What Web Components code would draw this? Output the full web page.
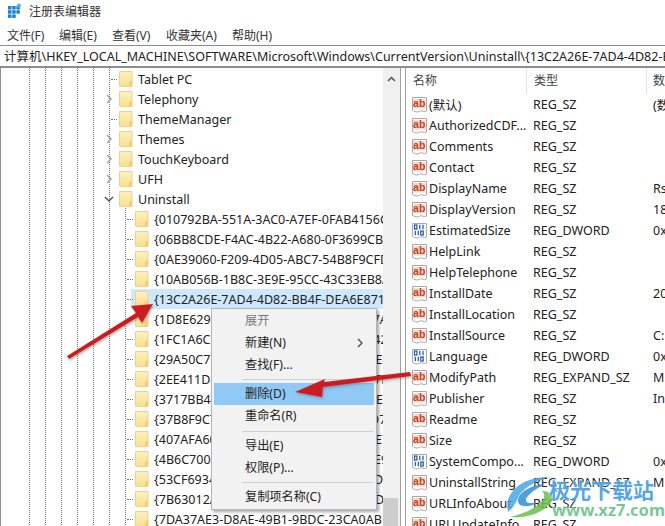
<!DOCTYPE html>
<html lang="zh">
<head>
<meta charset="utf-8">
<title>注册表编辑器</title>
<style>
    html, body {
        margin: 0;
        height: 100%;
        overflow: hidden;
        background: #fff;
        color: #222;
        font: 12.5px "Noto Sans", "Noto Sans CJK SC", sans-serif;
    }
</style>
</head>
<body>
<reg-app>
    <reg-titlebar>注册表编辑器</reg-titlebar>
    <reg-menubar>
        <span style="width:52px">文件(F)</span>
        <span style="width:53px">编辑(E)</span>
        <span style="width:54px">查看(V)</span>
        <span style="width:66px">收藏夹(A)</span>
        <span>帮助(H)</span>
    </reg-menubar>
    <reg-address>计算机\HKEY_LOCAL_MACHINE\SOFTWARE\Microsoft\Windows\CurrentVersion\Uninstall\{13C2A26E-7AD4-4D82-BB4F-DEA6E871A3F0}</reg-address>
    <reg-panes>
        <reg-tree slot="tree"></reg-tree>
        <reg-list slot="list"></reg-list>
    </reg-panes>
    <reg-menu></reg-menu>
    <reg-marks></reg-marks>
</reg-app>

<script>
const FOLDER_ICON = `
    <svg width="14" height="16" viewBox="0 0 14 16">
        <defs>
            <linearGradient id="fold" x1="0" y1="0" x2="0" y2="1">
                <stop offset="0" stop-color="#fdf0c0"/>
                <stop offset="1" stop-color="#fbdf8e"/>
            </linearGradient>
        </defs>
        <path d="M.5.5h12.500v15H.5z" fill="url(#fold)" stroke="#e9d48f"/>
        <path d="M10 15.500v-4l3-3v7z" fill="#f3cf70"/>
    </svg>`;

const STRING_ICON = `
    <svg width="17" height="18" viewBox="0 0 17 18">
        <path d="M1.500 1.500h14v13.500c-2.500 2-4.500-1.500-7 .2s-4.500.3-7-.7z" fill="#fff" stroke="#a9a9a9"/>
        <rect x="2" y="3" width="12.500" height="9.500" fill="#f6d9cc"/>
        <text x="8.200" y="11" text-anchor="middle" font-family="Liberation Sans" font-weight="700" font-size="10.500" fill="#c8401f">ab</text>
    </svg>`;

const DWORD_ICON = `
    <svg width="17" height="18" viewBox="0 0 17 18">
        <path d="M1.500 1.500h14v13.500c-2.500 2-4.500-1.500-7 .2s-4.500.3-7-.7z" fill="#fff" stroke="#a9a9a9"/>
        <g fill="none" stroke="#2a5fb0" stroke-width="1.300">
            <rect x="3.500" y="3" width="2.400" height="4"/>
            <path d="M8.800 2.800v4.400M12 2.800v4.400"/>
            <path d="M4.300 8.800v4.400M7.300 8.800v4.400"/>
            <rect x="9.800" y="9" width="2.400" height="4"/>
        </g>
    </svg>`;

class RegApp extends HTMLElement {
    constructor() {
        super();
        this.attachShadow({mode: "open"});
        this.shadowRoot.innerHTML = `
            <style>
                :host {
                    display: flex;
                    flex-direction: column;
                    position: relative;
                    width: 665px;
                    height: 526px;
                    overflow: hidden;
                }
            </style>
            <slot></slot>
        `;
    }
}

class RegTitlebar extends HTMLElement {
    constructor() {
        super();
        this.attachShadow({mode: "open"});
        this.shadowRoot.innerHTML = `
            <style>
                :host {
                    display: flex;
                    align-items: center;
                    gap: 7px;
                    height: 21px;
                    padding-left: 8px;
                    font-size: 12px;
                    color: #333;
                }
            </style>
            <svg width="14" height="15" viewBox="0 0 14 15">
                <g fill="#1b83c9">
                    <rect x="0" y="3" width="3.500" height="3.500"/>
                    <rect x="4.200" y="3" width="3.500" height="3.500"/>
                    <rect x="8.400" y="3" width="3.500" height="3.500"/>
                    <rect x="0" y="7.200" width="3.500" height="3.500"/>
                    <rect x="4.200" y="7.200" width="3.500" height="3.500"/>
                    <rect x="8.400" y="7.200" width="3.500" height="3.500"/>
                    <rect x="0" y="11.400" width="3.500" height="3.500"/>
                    <rect x="4.200" y="11.400" width="3.500" height="3.500"/>
                </g>
                <path d="M11 0l2.500 2.500L11 5 8.500 2.500z" fill="#5ab4e4"/>
            </svg>
            <slot></slot>
        `;
    }
}

class RegMenubar extends HTMLElement {
    constructor() {
        super();
        this.attachShadow({mode: "open"});
        this.shadowRoot.innerHTML = `
            <style>
                :host {
                    display: flex;
                    align-items: center;
                    box-sizing: border-box;
                    height: 24px;
                    padding: 3px 0 0 7px;
                    font-size: 12px;
                    color: #333;
                }
                ::slotted(span) {
                    display: block;
                    flex: none;
                }
            </style>
            <slot></slot>
        `;
    }
}

class RegAddress extends HTMLElement {
    constructor() {
        super();
        this.attachShadow({mode: "open"});
        this.shadowRoot.innerHTML = `
            <style>
                :host {
                    display: block;
                    box-sizing: border-box;
                    flex: none;
                    height: 23px;
                    line-height: 22px;
                    padding-left: 4px;
                    border-top: 1px solid #8e8e8e;
                    border-bottom: 2px solid #8e8e8e;
                    white-space: nowrap;
                    overflow: hidden;
                    color: #222;
                }
            </style>
            <slot></slot>
        `;
    }
}

class RegPanes extends HTMLElement {
    constructor() {
        super();
        this.attachShadow({mode: "open"});
        this.shadowRoot.innerHTML = `
            <style>
                :host {
                    display: flex;
                    flex: 1;
                    min-height: 0;
                }
                .scrollbar {
                    flex: none;
                    display: flex;
                    justify-content: center;
                    align-items: flex-start;
                    position: relative;
                    width: 17px;
                    background: #f0f0f0;
                }
                .scrollbar svg {
                    margin-top: 8px;
                }
                .thumb {
                    position: absolute;
                    left: 0;
                    right: 2px;
                    bottom: 0;
                    height: 28px;
                    background: #cdcdcd;
                }
                .splitter {
                    flex: none;
                    box-sizing: border-box;
                    width: 6px;
                    border-left: 1px solid #a0a0a0;
                    border-right: 1px solid #a0a0a0;
                }
            </style>
            <slot name="tree"></slot>
            <div class="scrollbar">
                <svg width="9" height="6" viewBox="0 0 9 6">
                    <path d="M1 5l3.500-3.500L8 5" fill="none" stroke="#505050" stroke-width="1.500"/>
                </svg>
                <div class="thumb"></div>
            </div>
            <div class="splitter"></div>
            <slot name="list"></slot>
        `;
    }
}

class TreeRow extends HTMLElement {
    constructor() {
        super();
        this.attachShadow({mode: "open"});
    }

    connectedCallback() {
        const expander = this.getAttribute('expander');
        let mark = '<span class="stub"></span>';

        if (expander === 'closed') {
            mark = `<svg class="arrow" width="7" height="10" viewBox="0 0 7 10">
                <path d="M1 1l4 4-4 4" fill="none" stroke="#a6a6a6" stroke-width="1.500"/></svg>`;
        }
        if (expander === 'open') {
            mark = `<svg class="arrow" width="10" height="7" viewBox="0 0 10 7">
                <path d="M1 1l4 4 4-4" fill="none" stroke="#555" stroke-width="1.500"/></svg>`;
        }

        this.shadowRoot.innerHTML = `
            <style>
                :host {
                    display: block;
                    height: 20px;
                }
                .row {
                    position: relative;
                    display: flex;
                    align-items: center;
                    height: 20px;
                    white-space: nowrap;
                    padding-left: var(--indent);
                }
                :host([selected]) .row {
                    background: linear-gradient(#cde8ff, #cde8ff) no-repeat var(--sel-x) 0 / 100% 100%;
                }
                .mark {
                    flex: none;
                    display: flex;
                    align-items: center;
                    justify-content: center;
                    width: 14px;
                    height: 20px;
                }
                .arrow {
                    margin-right: 6px;
                }
                .stub {
                    width: 6px;
                    margin-left: 4px;
                    border-top: 1px dotted #777;
                }
                svg { flex: none; }
                .label {
                    margin-left: 5px;
                }
            </style>
            <div class="row">
                <span class="mark">${mark}</span>
                ${FOLDER_ICON}
                <span class="label"><slot></slot></span>
            </div>
        `;
    }
}

class RegTree extends HTMLElement {
    constructor() {
        super();
        this.attachShadow({mode: "open"});
        this.shadowRoot.innerHTML = `
            <style>
                :host {
                    display: block;
                    flex: none;
                    box-sizing: border-box;
                    position: relative;
                    width: 383px;
                    padding-top: 1px;
                    border-left: 1px solid #8e8e8e;
                    overflow: hidden;
                    color: #222;
                    --dots: repeating-linear-gradient(#777 0 1px, transparent 1px 2px);
                    background-image: var(--dots), var(--dots), var(--dots), var(--dots), var(--dots), var(--dots), var(--dots);
                    background-repeat: no-repeat;
                    background-size: 1px 100%;
                    background-position: 28px 0, 44px 0, 60px 0, 76px 0, 92px 0, 108px 0, 124px 140px;
                }
                .level1 { --indent: 104px; }
                .level2 { --indent: 120px; --sel-x: 130px; }
            </style>
            <div class="level1">
                <tree-row>Tablet PC</tree-row>
                <tree-row expander="closed">Telephony</tree-row>
                <tree-row>ThemeManager</tree-row>
                <tree-row expander="closed">Themes</tree-row>
                <tree-row expander="closed">TouchKeyboard</tree-row>
                <tree-row expander="closed">UFH</tree-row>
                <tree-row expander="open">Uninstall</tree-row>
            </div>
            <div class="level2">
                <tree-row>{010792BA-551A-3AC0-A7EF-0FAB4156C382}</tree-row>
                <tree-row>{06BB8CDE-F4AC-4B22-A680-0F3699CBA1D2}</tree-row>
                <tree-row>{0AE39060-F209-4D05-ABC7-54B8F9CFD0E1}</tree-row>
                <tree-row>{10AB056B-1B8C-3E9E-95CC-43C33EB8A4F7}</tree-row>
                <tree-row selected>{13C2A26E-7AD4-4D82-BB4F-DEA6E871A3F0}</tree-row>
                <tree-row>{1D8E6291-B0D5-35EC-8441-6616F567A0F7}</tree-row>
                <tree-row>{1FC1A6C2-576E-489A-9B4A-92D21F542136}</tree-row>
                <tree-row>{29A50C7C-1F3B-4E1D-9A6B-7B0B9F8E4C91}</tree-row>
                <tree-row>{2EE411D8-60A7-4F5B-8C27-3D41E6A7F0B5}</tree-row>
                <tree-row>{3717BB4C-8E1A-4D36-A1F9-5C72D08E3B64}</tree-row>
                <tree-row>{37B8F9C7-03FB-3253-8781-2517C99D7C00}</tree-row>
                <tree-row>{407AFA60-2B7D-4C1E-9D05-8F6A1C3E7DE2}</tree-row>
                <tree-row>{4B6C7001-C7D6-3710-913E-5BC23FCE91E6}</tree-row>
                <tree-row>{53CF6934-A98D-3D84-9146-FC4EDF3D5641}</tree-row>
                <tree-row>{7B63012A-525B-3A4C-8E1D-1C9F0B7D2A45}</tree-row>
                <tree-row>{7DA37AE3-D8AE-49B1-9BDC-23CA0AB1F7C2}</tree-row>
            </div>
        `;
    }
}

class RegList extends HTMLElement {
    rows = [
        ['ab', '(默认)', 'REG_SZ', '(数'],
        ['ab', 'AuthorizedCDF...', 'REG_SZ', ''],
        ['ab', 'Comments', 'REG_SZ', ''],
        ['ab', 'Contact', 'REG_SZ', ''],
        ['ab', 'DisplayName', 'REG_SZ', 'Rs'],
        ['ab', 'DisplayVersion', 'REG_SZ', '18'],
        ['01', 'EstimatedSize', 'REG_DWORD', '0x'],
        ['ab', 'HelpLink', 'REG_SZ', ''],
        ['ab', 'HelpTelephone', 'REG_SZ', ''],
        ['ab', 'InstallDate', 'REG_SZ', '20'],
        ['ab', 'InstallLocation', 'REG_SZ', ''],
        ['ab', 'InstallSource', 'REG_SZ', 'C:'],
        ['01', 'Language', 'REG_DWORD', '0x'],
        ['ab', 'ModifyPath', 'REG_EXPAND_SZ', 'M'],
        ['ab', 'Publisher', 'REG_SZ', 'In'],
        ['ab', 'Readme', 'REG_SZ', ''],
        ['ab', 'Size', 'REG_SZ', ''],
        ['01', 'SystemCompo...', 'REG_DWORD', '0x'],
        ['ab', 'UninstallString', 'REG_EXPAND_SZ', 'M'],
        ['ab', 'URLInfoAbout', 'REG_SZ', ''],
        ['ab', 'URLUpdateInfo', 'REG_SZ', '']
    ];

    constructor() {
        super();
        this.attachShadow({mode: "open"});

        const rowsHtml = this.rows.map(([type, name, kind, data]) => `
            <div class="row">
                <span class="name">${type === 'ab' ? STRING_ICON : DWORD_ICON}<span>${name}</span></span>
                <span>${kind}</span>
                <span>${data}</span>
            </div>
        `).join('');

        this.shadowRoot.innerHTML = `
            <style>
                :host {
                    display: block;
                    flex: 1;
                    min-width: 0;
                    overflow: hidden;
                    color: #222;
                }
                .head, .row {
                    display: grid;
                    grid-template-columns: 121px 120px 1fr;
                    white-space: nowrap;
                }
                .head {
                    height: 26px;
                    align-items: center;
                    color: #444;
                    font-size: 12px;
                }
                .head span {
                    height: 26px;
                    line-height: 25px;
                    box-sizing: border-box;
                    padding-left: 7px;
                    border-right: 1px solid #e4e4e4;
                }
                .head span:last-child {
                    padding-left: 6px;
                    border-right: 0;
                }
                .row {
                    height: 21px;
                    align-items: center;
                }
                .row > span:not(.name) {
                    padding-left: 6px;
                }
                .name {
                    display: flex;
                    align-items: center;
                    gap: 1px;
                    padding-left: 5px;
                }
            </style>
            <div class="head"><span>名称</span><span>类型</span><span>数据</span></div>
            ${rowsHtml}
        `;
    }
}

class RegMenu extends HTMLElement {
    constructor() {
        super();
        this.attachShadow({mode: "open"});
        this.shadowRoot.innerHTML = `
            <style>
                :host {
                    position: absolute;
                    left: 211px;
                    top: 308px;
                    box-sizing: border-box;
                    display: block;
                    width: 166px;
                    height: 202px;
                    padding: 1px 2px;
                    background: #f2f2f2;
                    border: 1px solid #b5b5b5;
                    box-shadow: 2px 2px 3px rgba(0, 0, 0, 0.35);
                    font-size: 12.2px;
                    color: #222;
                }
                .item {
                    position: relative;
                    height: 22px;
                    line-height: 21px;
                    padding-left: 31px;
                }
                .item.disabled { color: #777; }
                .item.active { background: #90c8f6; }
                .item svg {
                    position: absolute;
                    right: 11px;
                    top: 6px;
                }
                .sep {
                    height: 1px;
                    margin: 3px 1px 3px 28px;
                    background: #cfcfcf;
                }
                .sep.wide {
                    margin-top: 4px;
                }
            </style>
            <div class="item disabled">展开</div>
            <div class="item">新建(N)
                <svg width="6" height="10" viewBox="0 0 6 10"><path d="M1 1l4 4-4 4" fill="none" stroke="#444" stroke-width="1.200"/></svg>
            </div>
            <div class="item">查找(F)...</div>
            <div class="sep"></div>
            <div class="item active">删除(D)</div>
            <div class="item">重命名(R)</div>
            <div class="sep wide"></div>
            <div class="item">导出(E)</div>
            <div class="item">权限(P)...</div>
            <div class="sep"></div>
            <div class="item">复制项名称(C)</div>
        `;
    }
}

class RegMarks extends HTMLElement {
    constructor() {
        super();
        this.attachShadow({mode: "open"});
        this.shadowRoot.innerHTML = `
            <style>
                :host {
                    position: absolute;
                    inset: 0;
                    display: block;
                    pointer-events: none;
                }
                svg {
                    position: absolute;
                    left: 0;
                    top: 0;
                }
                .brand, .site {
                    position: absolute;
                    white-space: nowrap;
                    text-shadow: 0 0 2px #fff;
                }
                .brand {
                    left: 549px;
                    top: 477px;
                    font: 700 21px/24px "Noto Sans CJK SC", sans-serif;
                    color: rgba(53, 150, 225, 0.85);
                }
                .site {
                    left: 552px;
                    top: 500px;
                    font: 700 16.5px/20px "Noto Sans", sans-serif;
                    color: rgba(96, 190, 130, 0.85);
                }
            </style>
            <svg width="665" height="526" viewBox="0 0 665 526">
                <defs>
                    <filter id="soft" x="-10%" y="-30%" width="120%" height="160%">
                        <feDropShadow dx="1" dy="1.5" stdDeviation="1" flood-color="#555" flood-opacity="0.45"/>
                    </filter>
                </defs>
                <!-- red arrows -->
                <g fill="#cb1d23" filter="url(#soft)">
                    <path d="M67 356L136 313 131 306 153 304 142 323 138 317 69 359z"/>
                    <path d="M410 372L324 382 325 379 295 392 322 397 323 387 411 376z"/>
                </g>
                <!-- watermark swirl -->
                <g opacity="0.85">
                    <path d="M508 512C503 492 524 476 550 477 538 480 522 488 518 498 515 505 512 509 508 512z" fill="#4aa6e6"/>
                    <path d="M545 484C530 485 518 493 518 501 518 507 528 508 537 503L530 503C525 503 525 499 528 496 532 491 540 487 545 484z" fill="#2f8fd8"/>
                    <path d="M510 517C528 519 548 511 552 500 554 494 549 491 542 491 545 494 545 498 541 502 533 510 522 514 510 517z" fill="#6cc04e"/>
                </g>
            </svg>
            <div class="brand">极光下载站</div>
            <div class="site">www.xz7.com</div>
        `;
    }
}

customElements.define('reg-app', RegApp);
customElements.define('reg-titlebar', RegTitlebar);
customElements.define('reg-menubar', RegMenubar);
customElements.define('reg-address', RegAddress);
customElements.define('reg-panes', RegPanes);
customElements.define('tree-row', TreeRow);
customElements.define('reg-tree', RegTree);
customElements.define('reg-list', RegList);
customElements.define('reg-menu', RegMenu);
customElements.define('reg-marks', RegMarks);
</script>
</body>
</html>
